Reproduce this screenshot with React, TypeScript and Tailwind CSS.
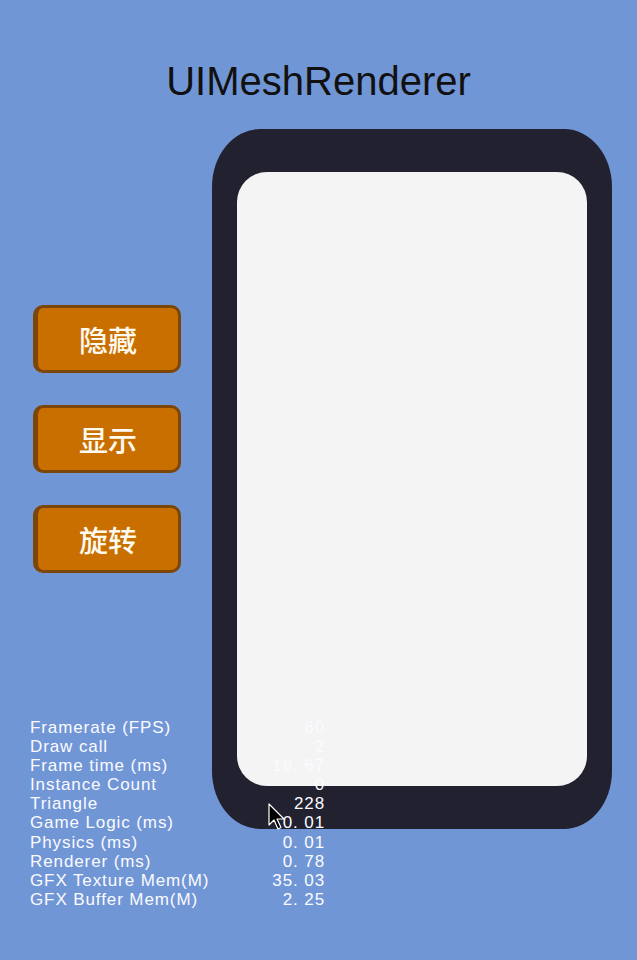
import React from "react";

const stats: [string, string][] = [
  ["Framerate (FPS)", "60"],
  ["Draw call", "2"],
  ["Frame time (ms)", "16. 67"],
  ["Instance Count", "0"],
  ["Triangle", "228"],
  ["Game Logic (ms)", "0. 01"],
  ["Physics (ms)", "0. 01"],
  ["Renderer (ms)", "0. 78"],
  ["GFX Texture Mem(M)", "35. 03"],
  ["GFX Buffer Mem(M)", "2. 25"],
];

function Btn({ label }: { label: string }) {
  return (
    <div className="w-[148px] h-[68px] rounded-[10px] bg-[#c96f00] border-[3px] border-[#7c4608] border-l-[5px] flex items-center justify-center text-[29px] leading-none font-medium text-[#fffaf0] [font-family:'Noto_Sans_CJK_SC','Noto_Sans',sans-serif]">
      {label}
    </div>
  );
}

export default function App() {
  return (
    <div className="relative w-full h-[960px] overflow-hidden bg-[#7196d6] [font-family:'Liberation_Sans',Arial,sans-serif]">
      <div className="pt-[61px] h-[100px] text-center text-[40px] leading-[40px] text-[#111111]">
        UIMeshRenderer
      </div>
      <div className="flex mt-[29px]">
        <div className="pl-[33px] pt-[176px] flex flex-col gap-[32px]">
          <Btn label="隐藏" />
          <Btn label="显示" />
          <Btn label="旋转" />
        </div>
        <div className="ml-auto mr-[25px] w-[400px] h-[700px] rounded-[48px/58px] bg-[#22212f] px-[25px] py-[43px]">
          <div className="w-full h-full rounded-[30px] bg-[#f4f4f4]" />
        </div>
      </div>

      <div className="absolute left-[30px] top-[718px] w-[295px] text-[#fbfbff] text-[17px] leading-[19.1px] tracking-[0.9px]">
        {stats.map(([k, v]) => (
          <div key={k} className="flex justify-between">
            <span>{k}</span>
            <span>{v}</span>
          </div>
        ))}
      </div>

      <svg
        className="absolute left-[268px] top-[803px]"
        width="18"
        height="28"
        viewBox="0 0 18 28"
      >
        <path
          d="M1 1 L1 22 L6 17 L10 26 L13 24.5 L9 16 L16 16 Z"
          fill="#000"
          stroke="#fff"
          strokeWidth="1.2"
          strokeLinejoin="round"
        />
      </svg>
    </div>
  );
}
